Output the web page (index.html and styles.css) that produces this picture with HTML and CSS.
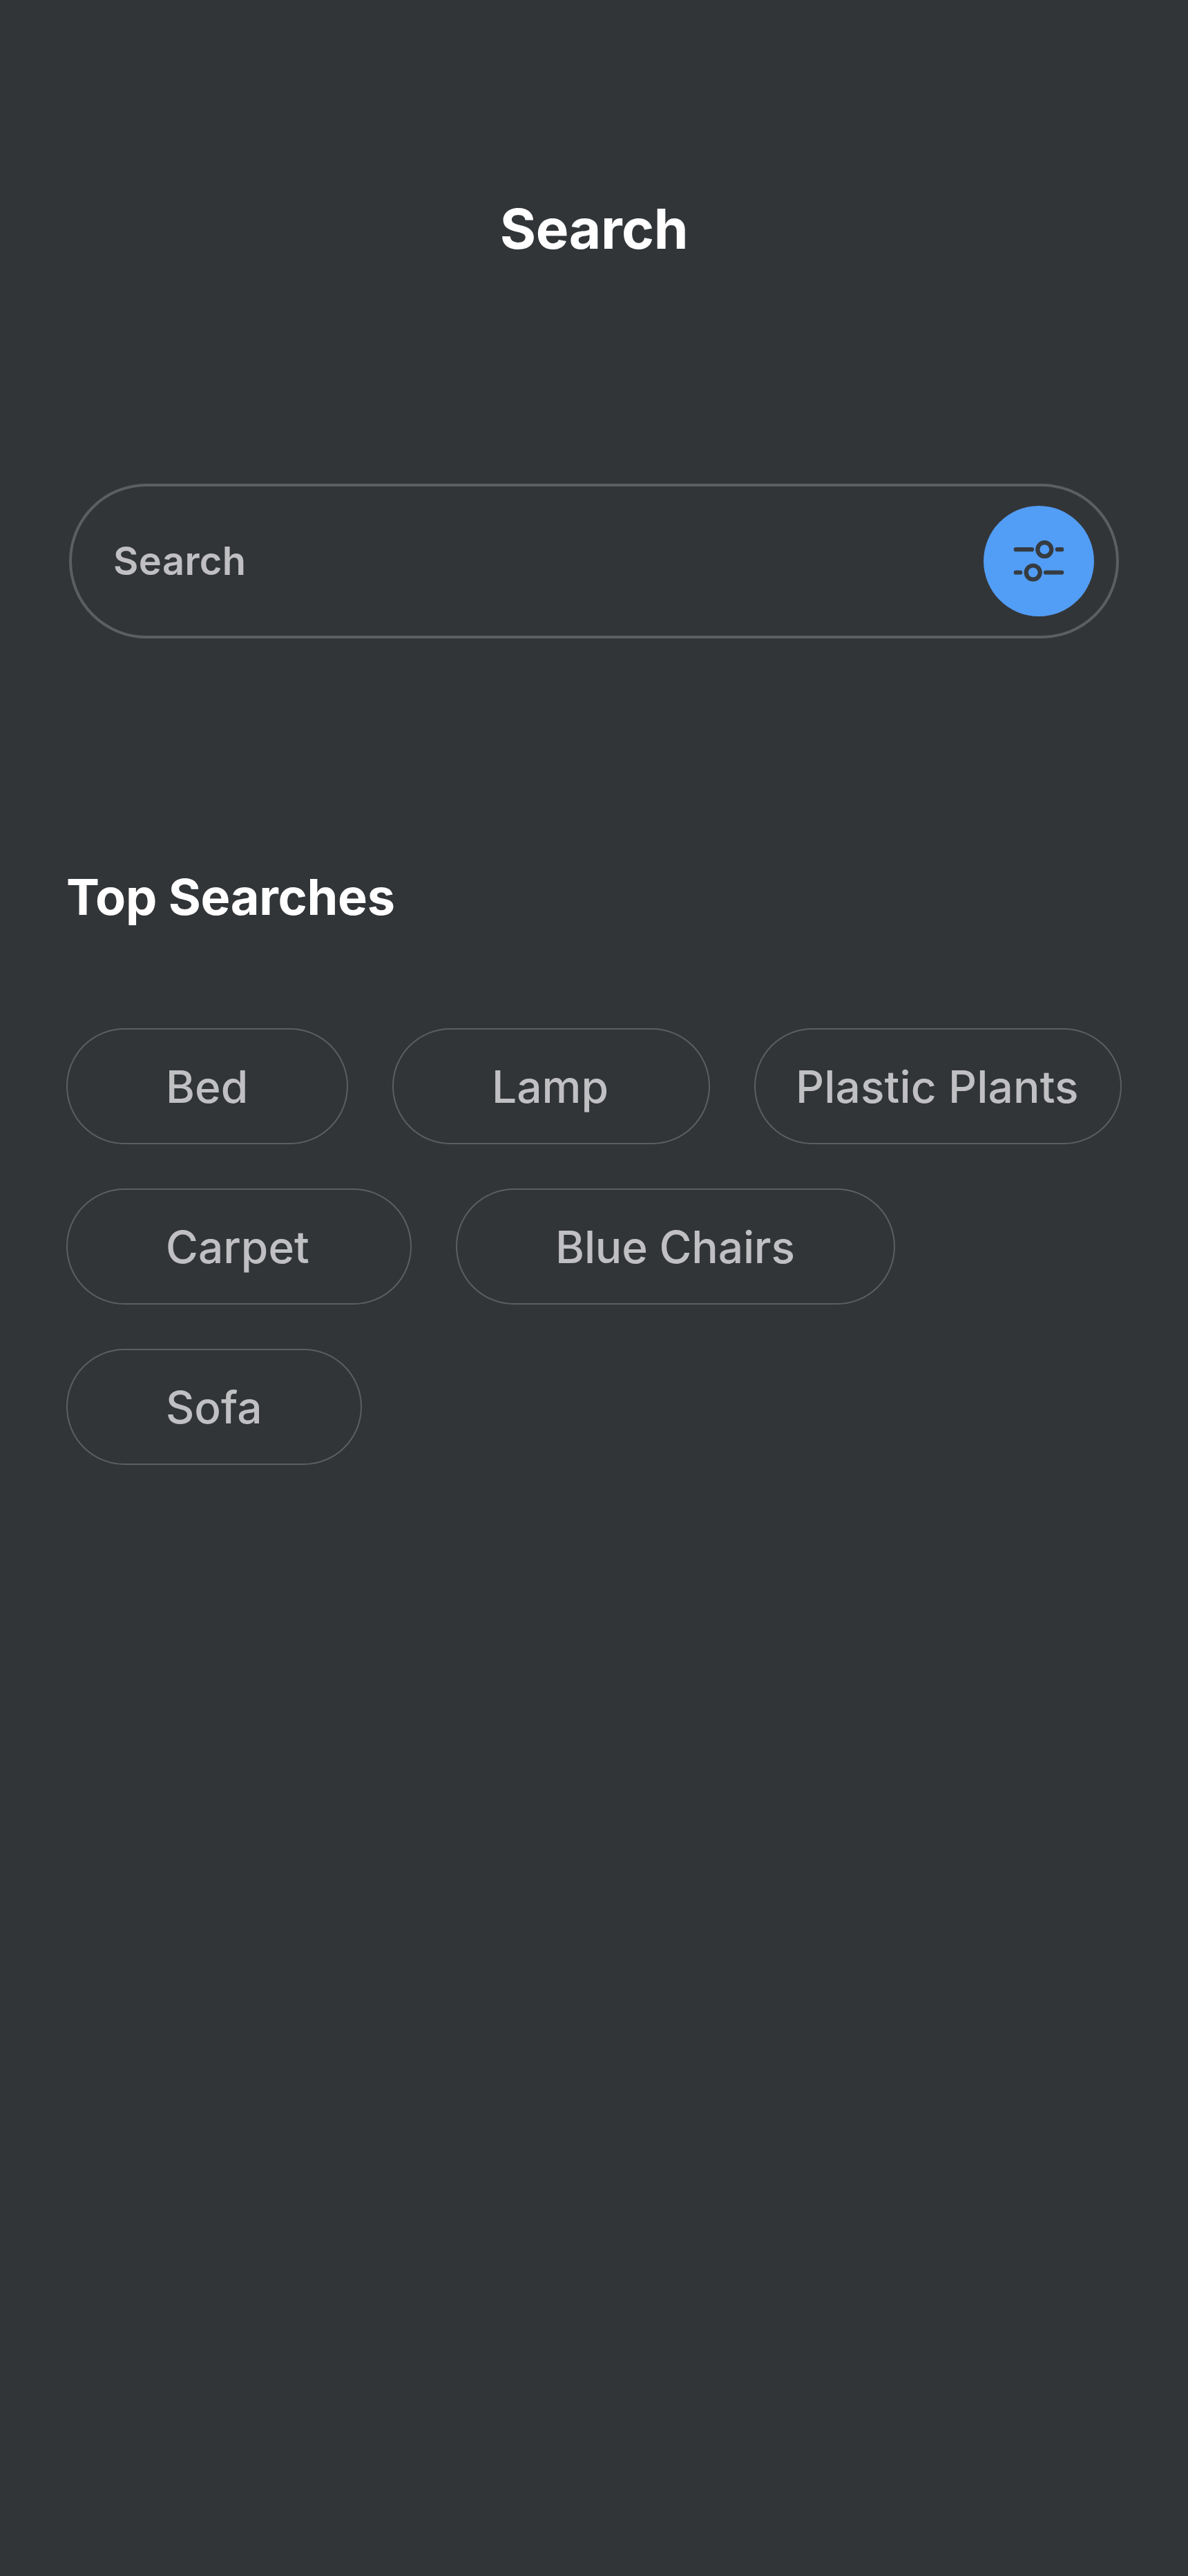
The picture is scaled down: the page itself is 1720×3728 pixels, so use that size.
FILE: index.html
```html
<!DOCTYPE html>
<html lang="en">
<head>
<meta charset="utf-8">
<title>Search</title>
<link rel="stylesheet" href="styles.css">
</head>
<body>
<main class="screen">
  <h1 class="title">Search</h1>
  <div class="search-bar">
    <span class="search-label">Search</span>
    <button class="filter-button" aria-label="Filters">
      <svg class="filter-icon" viewBox="0 0 80 80" fill="none" stroke="currentColor" stroke-width="6.2" stroke-linecap="round">
        <path d="M6.8 23.2H30M66.8 23.2H73.2"/>
        <circle cx="48.3" cy="23.2" r="10"/>
        <path d="M6.8 56.5H13.2M50 56.5H73.2"/>
        <circle cx="31.7" cy="56.5" r="10"/>
      </svg>
    </button>
  </div>
  <h2 class="subtitle">Top Searches</h2>
  <ul class="chips">
    <li class="chip chip-bed">Bed</li>
    <li class="chip chip-lamp">Lamp</li>
    <li class="chip chip-plants">Plastic Plants</li>
    <li class="chip chip-carpet">Carpet</li>
    <li class="chip chip-chairs">Blue Chairs</li>
    <li class="chip chip-sofa">Sofa</li>
  </ul>
</main>
</body>
</html>
```
FILE: styles.css
```css
* {
  box-sizing: border-box;
}

body {
  margin: 0;
  background: #323538;
  font-family: Inter, "Liberation Sans", sans-serif;
}

.screen {
  display: flex;
  flex-direction: column;
  min-height: 3728px;
  padding: 282px 96px 0;
}

.title {
  margin: 0;
  color: #fff;
  font-size: 80px;
  font-weight: 700;
  line-height: 98px;
  letter-spacing: -0.4px;
  text-align: center;
}

.search-bar {
  display: flex;
  align-items: center;
  justify-content: space-between;
  height: 224px;
  margin: 320px 4px 0;
  padding: 0 32px 0 60px;
  border: 4px solid #5b5f61;
  border-radius: 112px;
}

.search-label {
  color: #c0c0c2;
  font-size: 56px;
  font-weight: 600;
  line-height: 68px;
  letter-spacing: 0.4px;
}

.filter-button {
  display: flex;
  align-items: center;
  justify-content: center;
  width: 160px;
  height: 160px;
  padding: 0;
  border: 0;
  border-radius: 50%;
  background: #529df5;
  color: #353b40;
}

.filter-icon {
  width: 80px;
  height: 80px;
}

.subtitle {
  margin: 330px 0 0;
  color: #fff;
  font-size: 72px;
  font-weight: 700;
  line-height: 88px;
  letter-spacing: -0.32px;
}

.chips {
  display: flex;
  flex-wrap: wrap;
  gap: 64px;
  margin: 146px 0 0;
  padding: 0;
  list-style: none;
}

.chip {
  height: 168px;
  padding-left: 142px;
  border: 2px solid #5b5f61;
  border-radius: 84px;
  color: #c0c0c2;
  font-size: 64px;
  font-weight: 500;
  line-height: 165px;
  white-space: nowrap;
}

.chip-bed { width: 408px; }
.chip-lamp { width: 460px; }
.chip-plants { width: 532px; padding-left: 58px; letter-spacing: 0.15px; }
.chip-carpet { width: 500px; }
.chip-chairs { width: 636px; letter-spacing: -0.15px; }
.chip-sofa { width: 428px; }
```
